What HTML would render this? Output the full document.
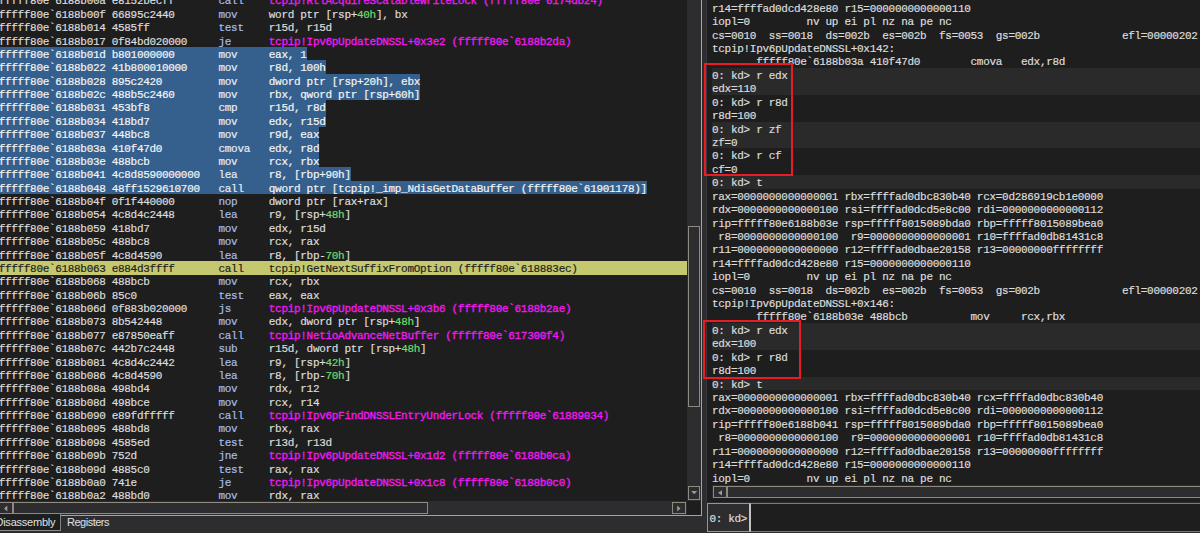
<!DOCTYPE html>
<html>
<head>
<meta charset="utf-8">
<title>WinDbg</title>
<style>
html,body{margin:0;padding:0;}
body{width:1200px;height:533px;overflow:hidden;background:#2d2d30;position:relative;font-family:"Liberation Mono",monospace;-webkit-text-stroke:0.2px;}
.abs{position:absolute;}
#lp{position:absolute;left:0;top:0;width:687px;height:501px;background:#1e1e1e;overflow:hidden;}
.r{position:absolute;left:-1.3px;width:700px;height:13.375px;line-height:17px;font-size:11px;letter-spacing:-0.32px;color:#dcdcdc;white-space:pre;}
.r .mn{color:#a4bdea;}
.r .op{letter-spacing:-0.30px;}
.r .sy{color:#f418f4;-webkit-text-stroke:0.3px #f418f4;}
.r .nm{color:#6fdc6f;}
.r.cur{background:#c5c86f;color:#1e1e1e;height:14.1px;}
.r.cur .mn{color:#1e1e1e;}
.sel{display:inline-block;height:13.375px;background:#35608d;color:#f4f4f4;vertical-align:top;}
.sel .mn{color:#e6ecf8;}
#rp{position:absolute;left:707px;top:0;width:493px;height:502px;background:#1e1e1e;overflow:hidden;}
.q{position:absolute;left:5px;width:500px;height:13.425px;line-height:17px;font-size:11px;letter-spacing:-0.295px;color:#dcdcdc;white-space:pre;}
.q span{position:relative;left:0px;}
.q.lt{background:#2a2a2a;}
.sb{background:#2d2d30;border:1px solid #8e8a80;box-sizing:border-box;}
.red{position:absolute;border:2px solid #e81c24;box-sizing:border-box;}
.tab{position:absolute;font-family:"Liberation Sans",sans-serif;font-size:11px;color:#e0e0e0;white-space:pre;-webkit-text-stroke:0;}
</style>
</head>
<body>
<div id="lp">
<div class="r" style="top:-6.560px">fffff80e`6188b00a e8152becff       <span class="mn">call    </span><span class="op"><span class="sy">tcpip!RtlAcquireScalableWriteLock (fffff80e`6174db24)</span></span></div>
<div class="r" style="top:6.815px">fffff80e`6188b00f 66895c2440       <span class="mn">mov     </span><span class="op">word ptr [rsp+<span class="nm">40h</span>], bx</span></div>
<div class="r" style="top:20.190px">fffff80e`6188b014 4585ff           <span class="mn">test    </span><span class="op">r15d, r15d</span></div>
<div class="r" style="top:33.565px">fffff80e`6188b017 0f84bd020000     <span class="mn">je      </span><span class="op"><span class="sy">tcpip!Ipv6pUpdateDNSSL+0x3e2 (fffff80e`6188b2da)</span></span></div>
<div class="r s" style="top:46.940px"><span class="sel">fffff80e`6188b01d b801000000       <span class="mn">mov     </span><span class="op">eax, 1</span></span></div>
<div class="r s" style="top:60.315px"><span class="sel">fffff80e`6188b022 41b800010000     <span class="mn">mov     </span><span class="op">r8d, 100h</span></span></div>
<div class="r s" style="top:73.690px"><span class="sel">fffff80e`6188b028 895c2420         <span class="mn">mov     </span><span class="op">dword ptr [rsp+20h], ebx</span></span></div>
<div class="r s" style="top:87.065px"><span class="sel">fffff80e`6188b02c 488b5c2460       <span class="mn">mov     </span><span class="op">rbx, qword ptr [rsp+60h]</span></span></div>
<div class="r s" style="top:100.440px"><span class="sel">fffff80e`6188b031 453bf8           <span class="mn">cmp     </span><span class="op">r15d, r8d</span></span></div>
<div class="r s" style="top:113.815px"><span class="sel">fffff80e`6188b034 418bd7           <span class="mn">mov     </span><span class="op">edx, r15d</span></span></div>
<div class="r s" style="top:127.190px"><span class="sel">fffff80e`6188b037 448bc8           <span class="mn">mov     </span><span class="op">r9d, eax</span></span></div>
<div class="r s" style="top:140.565px"><span class="sel">fffff80e`6188b03a 410f47d0         <span class="mn">cmova   </span><span class="op">edx, r8d</span></span></div>
<div class="r s" style="top:153.940px"><span class="sel">fffff80e`6188b03e 488bcb           <span class="mn">mov     </span><span class="op">rcx, rbx</span></span></div>
<div class="r s" style="top:167.315px"><span class="sel">fffff80e`6188b041 4c8d8590000000   <span class="mn">lea     </span><span class="op">r8, [rbp+90h]</span></span></div>
<div class="r s" style="top:180.690px"><span class="sel">fffff80e`6188b048 48ff1529610700   <span class="mn">call    </span><span class="op">qword ptr [tcpip!_imp_NdisGetDataBuffer (fffff80e`61901178)]</span></span></div>
<div class="r" style="top:194.065px">fffff80e`6188b04f 0f1f440000       <span class="mn">nop     </span><span class="op">dword ptr [rax+rax]</span></div>
<div class="r" style="top:207.440px">fffff80e`6188b054 4c8d4c2448       <span class="mn">lea     </span><span class="op">r9, [rsp+<span class="nm">48h</span>]</span></div>
<div class="r" style="top:220.815px">fffff80e`6188b059 418bd7           <span class="mn">mov     </span><span class="op">edx, r15d</span></div>
<div class="r" style="top:234.190px">fffff80e`6188b05c 488bc8           <span class="mn">mov     </span><span class="op">rcx, rax</span></div>
<div class="r" style="top:247.565px">fffff80e`6188b05f 4c8d4590         <span class="mn">lea     </span><span class="op">r8, [rbp-<span class="nm">70h</span>]</span></div>
<div class="r cur" style="top:260.940px">fffff80e`6188b063 e884d3ffff       <span class="mn">call    </span><span class="op">tcpip!GetNextSuffixFromOption (fffff80e`618883ec)</span></div>
<div class="r" style="top:274.315px">fffff80e`6188b068 488bcb           <span class="mn">mov     </span><span class="op">rcx, rbx</span></div>
<div class="r" style="top:287.690px">fffff80e`6188b06b 85c0             <span class="mn">test    </span><span class="op">eax, eax</span></div>
<div class="r" style="top:301.065px">fffff80e`6188b06d 0f883b020000     <span class="mn">js      </span><span class="op"><span class="sy">tcpip!Ipv6pUpdateDNSSL+0x3b6 (fffff80e`6188b2ae)</span></span></div>
<div class="r" style="top:314.440px">fffff80e`6188b073 8b542448         <span class="mn">mov     </span><span class="op">edx, dword ptr [rsp+<span class="nm">48h</span>]</span></div>
<div class="r" style="top:327.815px">fffff80e`6188b077 e87850eaff       <span class="mn">call    </span><span class="op"><span class="sy">tcpip!NetioAdvanceNetBuffer (fffff80e`617300f4)</span></span></div>
<div class="r" style="top:341.190px">fffff80e`6188b07c 442b7c2448       <span class="mn">sub     </span><span class="op">r15d, dword ptr [rsp+<span class="nm">48h</span>]</span></div>
<div class="r" style="top:354.565px">fffff80e`6188b081 4c8d4c2442       <span class="mn">lea     </span><span class="op">r9, [rsp+<span class="nm">42h</span>]</span></div>
<div class="r" style="top:367.940px">fffff80e`6188b086 4c8d4590         <span class="mn">lea     </span><span class="op">r8, [rbp-<span class="nm">70h</span>]</span></div>
<div class="r" style="top:381.315px">fffff80e`6188b08a 498bd4           <span class="mn">mov     </span><span class="op">rdx, r12</span></div>
<div class="r" style="top:394.690px">fffff80e`6188b08d 498bce           <span class="mn">mov     </span><span class="op">rcx, r14</span></div>
<div class="r" style="top:408.065px">fffff80e`6188b090 e89fdfffff       <span class="mn">call    </span><span class="op"><span class="sy">tcpip!Ipv6pFindDNSSLEntryUnderLock (fffff80e`61889034)</span></span></div>
<div class="r" style="top:421.440px">fffff80e`6188b095 488bd8           <span class="mn">mov     </span><span class="op">rbx, rax</span></div>
<div class="r" style="top:434.815px">fffff80e`6188b098 4585ed           <span class="mn">test    </span><span class="op">r13d, r13d</span></div>
<div class="r" style="top:448.190px">fffff80e`6188b09b 752d             <span class="mn">jne     </span><span class="op"><span class="sy">tcpip!Ipv6pUpdateDNSSL+0x1d2 (fffff80e`6188b0ca)</span></span></div>
<div class="r" style="top:461.565px">fffff80e`6188b09d 4885c0           <span class="mn">test    </span><span class="op">rax, rax</span></div>
<div class="r" style="top:474.940px">fffff80e`6188b0a0 741e             <span class="mn">je      </span><span class="op"><span class="sy">tcpip!Ipv6pUpdateDNSSL+0x1c8 (fffff80e`6188b0c0)</span></span></div>
<div class="r" style="top:488.315px">fffff80e`6188b0a2 488bd0           <span class="mn">mov     </span><span class="op">rdx, rax</span></div>
</div>
<!-- left vertical scrollbar -->
<div class="abs" style="left:687px;top:0;width:14px;height:501px;background:#2d2d30;"></div>
<div class="abs sb" style="left:688px;top:226px;width:12px;height:181px;"></div>
<div class="abs sb" style="left:688px;top:486px;width:12px;height:14px;"></div>
<svg class="abs" style="left:688px;top:486px" width="12" height="14"><path d="M3.2 5 L9.2 5 L6.2 8.2 Z" fill="#9a9a9a"/></svg>
<!-- left horizontal scrollbar -->
<div class="abs" style="left:0;top:501px;width:687px;height:14px;background:#2d2d30;"></div>
<div class="abs" style="left:687px;top:501px;width:14px;height:14px;background:#1e1e1e;"></div>
<div class="abs sb" style="left:-2px;top:502px;width:15px;height:12px;"></div>
<svg class="abs" style="left:0;top:502px" width="12" height="12"><path d="M7.3 3.6 L7.3 9.4 L4 6.5 Z" fill="#9a9a9a"/></svg>
<div class="abs sb" style="left:13px;top:502px;width:415px;height:12px;"></div>
<div class="abs sb" style="left:672px;top:502px;width:14px;height:12px;"></div>
<svg class="abs" style="left:672px;top:502px" width="14" height="12"><path d="M5.2 3.6 L5.2 9.4 L8.5 6.5 Z" fill="#9a9a9a"/></svg>
<!-- pane borders -->
<div class="abs" style="left:701px;top:0;width:1px;height:516px;background:#a4a4a4;"></div>
<div class="abs" style="left:61px;top:515px;width:641px;height:1px;background:#a4a4a4;"></div>
<!-- tabs -->
<div class="abs" style="left:-2px;top:514px;width:63px;height:17px;background:#1e1e1e;border-right:1px solid #808080;border-bottom:1px solid #8a8a8a;box-sizing:border-box;"></div>
<div class="tab" id="t1" style="left:-4.6px;top:516px;line-height:13px;letter-spacing:-0.22px;">Disassembly</div>
<div class="tab" id="t2" style="left:67px;top:516px;line-height:13px;letter-spacing:-0.49px;">Registers</div>
<!-- right pane -->
<div class="abs" style="left:706px;top:0;width:1px;height:502px;background:#38383c;"></div>
<div id="rp">
<div class="q" style="top:0.700px"><span>r14=ffffad0dcd428e80 r15=0000000000000110</span></div>
<div class="q" style="top:14.125px"><span>iopl=0         nv up ei pl nz na pe nc</span></div>
<div class="q" style="top:27.550px"><span>cs=0010  ss=0018  ds=002b  es=002b  fs=0053  gs=002b             efl=00000202</span></div>
<div class="q" style="top:40.975px"><span>tcpip!Ipv6pUpdateDNSSL+0x142:</span></div>
<div class="q" style="top:54.400px"><span>       fffff80e`6188b03a 410f47d0        cmova   edx,r8d</span></div>
<div class="q lt" style="top:67.825px"><span>0: kd&gt; r edx</span></div>
<div class="q lt" style="top:81.250px"><span>edx=110</span></div>
<div class="q" style="top:94.675px"><span>0: kd&gt; r r8d</span></div>
<div class="q" style="top:108.100px"><span>r8d=100</span></div>
<div class="q lt" style="top:121.525px"><span>0: kd&gt; r zf</span></div>
<div class="q lt" style="top:134.950px"><span>zf=0</span></div>
<div class="q" style="top:148.375px"><span>0: kd&gt; r cf</span></div>
<div class="q" style="top:161.800px"><span>cf=0</span></div>
<div class="q lt" style="top:175.225px"><span>0: kd&gt; t</span></div>
<div class="q" style="top:188.650px"><span>rax=0000000000000001 rbx=ffffad0dbc830b40 rcx=0d286919cb1e0000</span></div>
<div class="q" style="top:202.075px"><span>rdx=0000000000000100 rsi=ffffad0dcd5e8c00 rdi=0000000000000112</span></div>
<div class="q" style="top:215.500px"><span>rip=fffff80e6188b03e rsp=fffff8015089bda0 rbp=fffff8015089bea0</span></div>
<div class="q" style="top:228.925px"><span> r8=0000000000000100  r9=0000000000000001 r10=ffffad0db81431c8</span></div>
<div class="q" style="top:242.350px"><span>r11=0000000000000000 r12=ffffad0dbae20158 r13=00000000ffffffff</span></div>
<div class="q" style="top:255.775px"><span>r14=ffffad0dcd428e80 r15=0000000000000110</span></div>
<div class="q" style="top:269.200px"><span>iopl=0         nv up ei pl nz na pe nc</span></div>
<div class="q" style="top:282.625px"><span>cs=0010  ss=0018  ds=002b  es=002b  fs=0053  gs=002b             efl=00000202</span></div>
<div class="q" style="top:296.050px"><span>tcpip!Ipv6pUpdateDNSSL+0x146:</span></div>
<div class="q" style="top:309.475px"><span>       fffff80e`6188b03e 488bcb          mov     rcx,rbx</span></div>
<div class="q lt" style="top:322.900px"><span>0: kd&gt; r edx</span></div>
<div class="q lt" style="top:336.325px"><span>edx=100</span></div>
<div class="q" style="top:349.750px"><span>0: kd&gt; r r8d</span></div>
<div class="q" style="top:363.175px"><span>r8d=100</span></div>
<div class="q lt" style="top:376.600px"><span>0: kd&gt; t</span></div>
<div class="q" style="top:390.025px"><span>rax=0000000000000001 rbx=ffffad0dbc830b40 rcx=ffffad0dbc830b40</span></div>
<div class="q" style="top:403.450px"><span>rdx=0000000000000100 rsi=ffffad0dcd5e8c00 rdi=0000000000000112</span></div>
<div class="q" style="top:416.875px"><span>rip=fffff80e6188b041 rsp=fffff8015089bda0 rbp=fffff8015089bea0</span></div>
<div class="q" style="top:430.300px"><span> r8=0000000000000100  r9=0000000000000001 r10=ffffad0db81431c8</span></div>
<div class="q" style="top:443.725px"><span>r11=0000000000000000 r12=ffffad0dbae20158 r13=00000000ffffffff</span></div>
<div class="q" style="top:457.150px"><span>r14=ffffad0dcd428e80 r15=0000000000000110</span></div>
<div class="q" style="top:470.575px"><span>iopl=0         nv up ei pl nz na pe nc</span></div>
</div>
<div class="red" style="left:704px;top:63px;width:89px;height:113px;"></div>
<div class="red" style="left:702.8px;top:319.7px;width:98.2px;height:59.6px;"></div>
<!-- right horizontal scrollbar -->
<div class="abs" style="left:712px;top:485px;width:488px;height:13px;background:#2d2d30;"></div>
<div class="abs sb" style="left:713px;top:485.5px;width:14px;height:12.5px;"></div>
<svg class="abs" style="left:713px;top:485.5px" width="14" height="13"><path d="M9 4.2 L9 9.4 L5 6.8 Z" fill="#9a9a9a"/></svg>
<div class="abs sb" style="left:727px;top:485.5px;width:480px;height:12.5px;"></div>
<!-- input -->
<div class="abs" style="left:707px;top:503px;width:44px;height:29px;background:#2d2d30;border:1px solid #94949c;border-right:2px solid #c2c2c2;box-sizing:border-box;"></div>
<div class="abs" style="left:751px;top:503px;width:460px;height:29px;background:#1e1e1e;border-top:1px solid #7a7a7a;border-bottom:1px solid #74787e;box-sizing:border-box;"></div>
<div class="abs" style="left:709.4px;top:512.5px;font-size:11px;letter-spacing:-0.32px;line-height:13.4px;color:#dcdcdc;white-space:pre;">0: kd&gt;</div>
</body>
</html>
